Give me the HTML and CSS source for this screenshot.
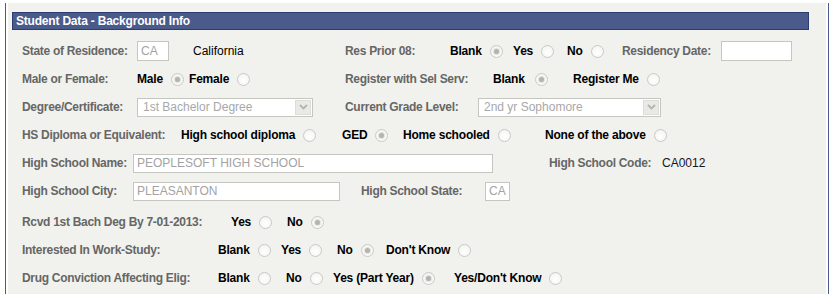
FILE: index.html
```html
<!DOCTYPE html>
<html>
<head>
<meta charset="utf-8">
<title>Student Data - Background Info</title>
<link rel="stylesheet" href="styles.css">
</head>
<body>
<div class="frame">
  <div class="panel">
    <div class="hdr">Student Data - Background Info</div>
    <div class="rows">
      <div class="row">
        <span class="lbl w115">State of Residence:</span>
        <span class="cell w56"><span class="inp inp-tall w32">CA</span></span>
        <span class="val w152">California</span>
        <span class="lbl w105">Res Prior 08:</span>
        <span class="opt w63">Blank<span class="radio on"></span></span>
        <span class="opt w54">Yes<span class="radio"></span></span>
        <span class="opt w55">No<span class="radio"></span></span>
        <span class="lbl w99">Residency Date:</span>
        <span class="inp inp-tall w71"></span>
      </div>
      <div class="row">
        <span class="lbl w115">Male or Female:</span>
        <span class="opt w52">Male<span class="radio on"></span></span>
        <span class="opt w156">Female<span class="radio"></span></span>
        <span class="lbl w148">Register with Sel Serv:</span>
        <span class="opt w80">Blank<span class="radio on radio-wide"></span></span>
        <span class="opt">Register Me<span class="radio"></span></span>
      </div>
      <div class="row">
        <span class="lbl w115">Degree/Certificate:</span>
        <span class="cell w208">
          <span class="sel w176"><span class="sel-txt">1st Bachelor Degree</span><span class="sel-btn"><svg width="9" height="6" viewBox="0 0 9 6"><path d="M1 1 L4.5 4.5 L8 1" fill="none" stroke="#b4b4b0" stroke-width="1.8"/></svg></span></span>
        </span>
        <span class="lbl w133">Current Grade Level:</span>
        <span class="sel w183"><span class="sel-txt">2nd yr Sophomore</span><span class="sel-btn"><svg width="9" height="6" viewBox="0 0 9 6"><path d="M1 1 L4.5 4.5 L8 1" fill="none" stroke="#b4b4b0" stroke-width="1.8"/></svg></span></span>
      </div>
      <div class="row">
        <span class="lbl w159">HS Diploma or Equivalent:</span>
        <span class="opt w161">High school diploma<span class="radio"></span></span>
        <span class="opt w61">GED<span class="radio on"></span></span>
        <span class="opt w142">Home schooled<span class="radio"></span></span>
        <span class="opt">None of the above<span class="radio"></span></span>
      </div>
      <div class="row">
        <span class="lbl w111">High School Name:</span>
        <span class="cell w416"><span class="inp w360">PEOPLESOFT HIGH SCHOOL</span></span>
        <span class="lbl w113">High School Code:</span>
        <span class="val code">CA0012</span>
      </div>
      <div class="row">
        <span class="lbl w111">High School City:</span>
        <span class="cell w228"><span class="inp w207">PLEASANTON</span></span>
        <span class="lbl w124">High School State:</span>
        <span class="inp w25">CA</span>
      </div>
      <div class="row row-gap">
        <span class="lbl w209">Rcvd 1st Bach Deg By 7-01-2013:</span>
        <span class="opt w56">Yes<span class="radio"></span></span>
        <span class="opt">No<span class="radio on"></span></span>
      </div>
      <div class="row">
        <span class="lbl w196">Interested In Work-Study:</span>
        <span class="opt w63">Blank<span class="radio"></span></span>
        <span class="opt w56">Yes<span class="radio"></span></span>
        <span class="opt w49">No<span class="radio on"></span></span>
        <span class="opt">Don't Know<span class="radio"></span></span>
      </div>
      <div class="row">
        <span class="lbl w196">Drug Conviction Affecting Elig:</span>
        <span class="opt w68">Blank<span class="radio"></span></span>
        <span class="opt w47">No<span class="radio"></span></span>
        <span class="opt w121">Yes (Part Year)<span class="radio on"></span></span>
        <span class="opt">Yes/Don't Know<span class="radio"></span></span>
      </div>
    </div>
  </div>
</div>
</body>
</html>
```
FILE: styles.css
```css
html, body {
  margin: 0;
  padding: 0;
  background: #ffffff;
  font-family: "Liberation Sans", Arial, sans-serif;
  font-size: 12px;
}

.frame {
  margin: 3px 0 0 5px;
  width: 824px;
  height: 291px;
  box-sizing: border-box;
  border-left: 1px solid #4b5b8e;
  border-right: 1px solid #4b5b8e;
  padding: 0 2px;
  background: #ffffff;
}

.panel {
  height: 100%;
  box-sizing: border-box;
  background: #f1f2ed;
  padding: 9px 0 0 4px;
}

.hdr {
  width: 797px;
  height: 18px;
  box-sizing: border-box;
  background: #4a5a8b;
  border: 1px solid #2b3c71;
  color: #ffffff;
  font-weight: bold;
  line-height: 16px;
  padding-left: 3px;
  letter-spacing: -0.2px;
}

.rows {
  margin-top: 7px;
  padding-left: 10px;
}

.row {
  display: flex;
  align-items: center;
  height: 28px;
}

.row-gap {
  margin-top: 3px;
}

.row > span {
  flex-shrink: 0;
}

.lbl {
  color: #666666;
  font-weight: bold;
  white-space: nowrap;
  letter-spacing: -0.3px;
}

.val {
  color: #000000;
  white-space: nowrap;
}

.code {
  color: #14142a;
}

.cell {
  display: flex;
  align-items: center;
}

.opt {
  display: flex;
  align-items: center;
  color: #000000;
  font-weight: bold;
  white-space: nowrap;
  letter-spacing: -0.2px;
}

.radio {
  width: 13px;
  height: 13px;
  box-sizing: border-box;
  border-radius: 50%;
  border: 1px solid #c9c9c6;
  background: radial-gradient(circle at 50% 60%, #ffffff 0%, #f7f7f5 60%, #ececea 100%);
  margin-left: 8px;
  flex-shrink: 0;
}

.radio-wide {
  margin-left: 10px;
}

.radio.on::after {
  content: "";
  display: block;
  width: 5px;
  height: 5px;
  margin: 3px;
  border-radius: 50%;
  background: #b3b3b0;
  box-shadow: 0 0 1px 1px #e0e0dc;
}

.inp {
  display: block;
  height: 19px;
  box-sizing: border-box;
  border: 1px solid #c6c6c1;
  background: #ffffff;
  color: #a3a3a3;
  padding-left: 3px;
  line-height: 17px;
  white-space: nowrap;
  overflow: hidden;
}

.inp-tall {
  height: 20px;
  line-height: 18px;
}

.sel {
  display: flex;
  align-items: center;
  height: 19px;
  box-sizing: border-box;
  border: 1px solid #c6c6c1;
  background: #ffffff;
  color: #a8a8a8;
  padding: 0 1px 0 5px;
}

.sel-txt {
  flex: 1;
  white-space: nowrap;
}

.sel-btn {
  width: 16px;
  height: 15px;
  box-sizing: border-box;
  border: 1px solid #dcdcd8;
  background: #e9e9e5;
  display: flex;
  align-items: center;
  justify-content: center;
}

.w25 { width: 25px; }
.w32 { width: 32px; }
.w47 { width: 47px; }
.w49 { width: 49px; }
.w52 { width: 52px; }
.w54 { width: 54px; }
.w55 { width: 55px; }
.w56 { width: 56px; }
.w61 { width: 61px; }
.w63 { width: 63px; }
.w68 { width: 68px; }
.w71 { width: 71px; }
.w80 { width: 80px; }
.w99 { width: 99px; }
.w105 { width: 105px; }
.w111 { width: 111px; }
.w113 { width: 113px; }
.w115 { width: 115px; }
.w121 { width: 121px; }
.w124 { width: 124px; }
.w133 { width: 133px; }
.w142 { width: 142px; }
.w148 { width: 148px; }
.w152 { width: 152px; }
.w156 { width: 156px; }
.w159 { width: 159px; }
.w161 { width: 161px; }
.w176 { width: 176px; }
.w183 { width: 183px; }
.w196 { width: 196px; }
.w207 { width: 207px; }
.w208 { width: 208px; }
.w209 { width: 209px; }
.w228 { width: 228px; }
.w360 { width: 360px; }
.w416 { width: 416px; }
```
